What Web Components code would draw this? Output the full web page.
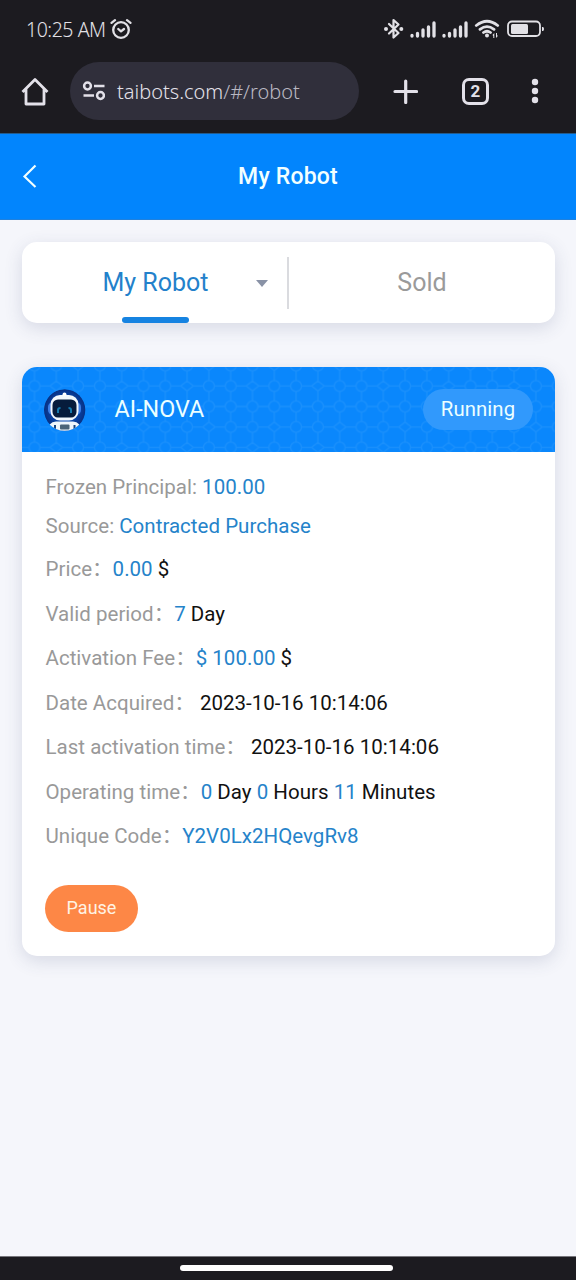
<!DOCTYPE html>
<html lang="en">
<head>
<meta charset="utf-8">
<title>My Robot</title>
<style>
html,body{margin:0;height:100%}
body{font-family:Roboto,"Noto Sans CJK SC",sans-serif;background:#f5f6fb;overflow:hidden}
</style>
</head>
<body>
<robot-app></robot-app>
<script>
const define = (name, html, setup) => customElements.define(name, class extends HTMLElement {
  constructor() {
    super();
    const t = document.createElement('template');
    t.innerHTML = html.trim();
    this.attachShadow({ mode: 'open' }).append(t.content.cloneNode(true));
  }
  connectedCallback() { if (setup) setup(this, this.shadowRoot); }
});

define('status-bar', `
<style>
:host{display:flex;height:58px;align-items:center;justify-content:space-between;padding:0 31px 0 26px;box-sizing:border-box;color:#e2e1e6;font:350 19.500px "Noto Sans",sans-serif}
.time{display:flex;align-items:center;gap:4px}
.time span{letter-spacing:-.45px}
svg{display:block;fill:none;stroke:currentColor;stroke-linecap:round;stroke-linejoin:round}
</style>
<div class="time"><span>10:25 AM</span>
<svg width="22" height="22" viewBox="0 0 22 22" stroke-width="2.300"><circle cx="11" cy="12" r="7.800"/><path d="M1.500 4.800 5 2.100M20.500 4.800 17 2.100M8.300 11l2.700 2.400 3-2.400"/></svg></div>
<svg width="162" height="24" viewBox="383 17 162 24">
<path stroke-width="2.200" d="M389 24l9.500 9-5 4.500V20l5 4.500-9.500 9"/>
<g fill="currentColor" stroke="none"><circle cx="386" cy="29" r="2"/><circle cx="401.300" cy="29" r="2"/>
<circle cx="487" cy="35.500" r="2"/><path d="M492.500 35l1.800-2v5h-1v-2zM497.800 36l-1.800 2v-5h1v2z"/><path d="M542 27h.8q1.200 0 1.200 2t-1.200 2h-.8z"/>
<rect x="511" y="24" width="17" height="10" rx="1.500"/></g>
<g stroke-width="3.300"><path d="M412 36v-.5M417.500 36v-2.500M423 36v-6M428.500 36v-9M434 36V23M444 36v-.5M449.500 36v-2.500M455 36v-6M460.500 36v-9M466 36V23"/></g>
<g stroke-width="2.800"><path d="M476.300 25.500q10.700-8.500 21.400 0M480 29.300q7-5.400 14 0M483.500 32.500q3.500-2.600 7 0"/></g>
<rect x="508" y="21.500" width="32" height="14.500" rx="4" stroke-width="1.800"/>
</svg>`);

define('browser-bar', `
<style>
:host{display:flex;height:75px;box-sizing:border-box;padding:4px 22px 13px 21px;align-items:center;color:#e3e1e9}
svg{display:block;fill:none;stroke:currentColor}
.url{display:flex;align-items:center;gap:12px;box-sizing:border-box;width:289px;height:58px;margin-left:21px;padding-left:12px;border-radius:29px;background:#302f3b;font:350 20px "Noto Sans",sans-serif}
.url i{font-style:normal;color:#b9b8c2}
.plus{margin-left:34px}
.tabs{display:flex;align-items:center;justify-content:center;width:21px;height:21px;border:3px solid;border-radius:7px;margin-left:44px;font:700 17px/21px Roboto,sans-serif}
.dots{margin-left:41px}
</style>
<svg width="28" height="30" viewBox="0 0 28 30" stroke-width="2.800"><path stroke-linejoin="round" d="M1.500 16 14 3.500 26.500 16M5 13v15h18V13"/></svg>
<div class="url"><svg width="23" height="20" viewBox="0 0 23 20" stroke-width="2.500"><circle cx="5.500" cy="5" r="3.400"/><circle cx="18.500" cy="14.500" r="3.400"/><path d="M12 5H22.500M1.500 14.500H12"/></svg><span>taibots.com<i>/#/robot</i></span></div>
<svg class="plus" width="25" height="25" viewBox="0 0 25 25" stroke-width="3.200" stroke-linecap="round"><path d="M2 12.500h21.500M12.700 2v21.500"/></svg>
<div class="tabs">2</div>
<svg class="dots" width="10" height="26" viewBox="0 0 10 26"><g fill="currentColor" stroke="none"><circle cx="5" cy="4" r="3.200"/><circle cx="5" cy="13" r="3.200"/><circle cx="5" cy="22" r="3.200"/></g></svg>`);

define('page-header', `
<style>
:host{display:grid;grid-template-columns:60px 1fr 60px;align-items:center;height:87px;box-sizing:border-box;background:#0285fd;border-top:1px solid #235b8c;border-bottom:1px solid #2281dc;color:#f2ffff}
svg{display:block;margin:0 0 2px 22px;fill:none;stroke:currentColor;stroke-width:2.200}
h1{margin:0;text-align:center;font-size:23px;font-weight:500;letter-spacing:.2px}
</style>
<svg width="16" height="26" viewBox="0 0 16 26"><path d="M13.500 2.500 2.500 13.500l11 10.500"/></svg><h1><slot></slot></h1>`);

define('robot-tabs', `
<style>
:host{display:grid;grid-template-columns:265px 2px 1fr;align-items:center;height:81px;border-radius:15px;background:#fff;box-shadow:0 5px 18px rgba(55,70,110,.16);font-size:25px}
.tab{position:relative;height:100%;box-sizing:border-box;padding-bottom:1px;display:flex;align-items:center;justify-content:center;color:#9a9a9a}
.on{color:#2381cb;padding-left:2px}
.on::after{content:"";position:absolute;bottom:0;left:100px;width:67px;height:6px;border-radius:3px;background:#1683e1}
.arrow{position:absolute;right:19px;top:38px;border:6.500px solid transparent;border-top:7px solid #8992a6;border-bottom:0}
.line{height:52px;background:#dadbdf}
</style>
<div class="tab on"><slot name="first"></slot><span class="arrow"></span></div><div class="line"></div><div class="tab"><slot name="second"></slot></div>`);

define('robot-avatar', `
<style>:host{display:block;width:42px;height:42px}svg{display:block}</style>
<svg width="42" height="42" viewBox="0 0 42 42">
<defs><clipPath id="c"><circle cx="20.500" cy="21" r="20.800"/></clipPath><radialGradient id="g"><stop offset=".5" stop-color="#0a4db4"/><stop offset="1" stop-color="#072f82"/></radialGradient></defs>
<g clip-path="url(#c)"><circle cx="21" cy="21" r="21" fill="url(#g)"/>
<path d="M4 42q0-9 8-9.500h17q8 .5 8 9.500z" fill="#eef6fc"/><path d="M11 36v6M30.500 36v6" stroke="#174581" stroke-width="2"/>
<rect x="4" y="13" width="33" height="13" rx="5" fill="#3c7fe8"/>
<rect x="6.500" y="6" width="28" height="25.500" rx="9.500" fill="#f2f8fd"/><circle cx="20.500" cy="5.500" r="2" fill="#fff"/>
<rect x="8.500" y="10.500" width="24" height="18" rx="5.500" fill="#061c3c"/>
<path d="M14 24v-3q0-2 2.500-2M27 24v-3q0-2-2.500-2" fill="none" stroke="#1479ad" stroke-width="2"/>
<rect x="16" y="35.500" width="9.500" height="5" rx="1" fill="#4b6478"/></g></svg>`);

define('robot-card', `
<style>
:host{display:block;height:589px;border-radius:15px;overflow:hidden;background:#fff;box-shadow:0 5px 18px rgba(55,70,110,.16)}
.head{position:relative;height:85px;background:#0a87fc;color:#ecffff}
.bg{position:absolute;inset:0}
.row{position:relative;height:100%;box-sizing:border-box;display:flex;align-items:center;padding:0 22px;font-size:23.300px}
.name{margin:-1px 0 0 28.600px;flex:1}
.badge{display:flex;align-items:center;justify-content:center;width:110px;height:41px;box-sizing:border-box;padding-bottom:2px;border-radius:21px;background:#3199fc;font-size:20.300px;letter-spacing:.1px}
.body{padding:16px 23px}
</style>
<div class="head"><svg class="bg" width="533" height="85"><defs><pattern id="p" width="65.400" height="61.500" patternUnits="userSpaceOnUse" patternTransform="translate(1.600 8.750)"><g fill="none" stroke="#2897fb" stroke-width="1.300" opacity=".55">
<circle cx="10.900" cy="10.250" r="5.500"/><circle cx="54.500" cy="10.250" r="5.500"/><circle cx="10.900" cy="30.750" r="5.500"/><circle cx="32.700" cy="30.750" r="5.500"/><circle cx="54.500" cy="30.750" r="5.500"/><circle cx="10.900" cy="51.250" r="5.500"/><circle cx="32.700" cy="51.250" r="5.500"/>
<path d="M0 10.250h5.400M16.400 10.250h10l6.300 5 6.300-5h10M60 10.250h5.400M26.400 10.250l6.300-5 6.300 5M0 30.750h5.400M16.400 30.750h10.800M38.200 30.750H49M60 30.750h5.400M0 51.250h5.400M16.400 51.250h10.800M38.200 51.250h10l6.300 5 6.300-5h4.600M48.200 51.250l6.300-5 6.300 5M10.900 0v4.750M10.900 15.750v9.500M10.900 36.250v9.500M10.900 56.750v4.750M32.700 0v5.250M32.700 15.250v10M32.700 36.250v9.500M32.700 56.750v4.750M54.500 0v4.750M54.500 15.750v9.500M54.500 36.250v10M54.500 56.250v5.250"/></g></pattern></defs><rect width="533" height="85" fill="url(#p)"/></svg>
<div class="row"><robot-avatar></robot-avatar><span class="name"><slot name="name"></slot></span><span class="badge"><slot name="state"></slot></span></div></div>
<div class="body"><slot></slot></div>`);

define('info-row', `
<style>
:host{display:block;height:44.500px;line-height:44.500px;font-size:20.500px;color:#111;white-space:pre;text-indent:.5px;letter-spacing:.02px}
:host([compact]){height:38.500px;line-height:38.500px}
:host([spaced]){margin-top:2px}
.label{color:#999}
::slotted(b){font-weight:400;color:#2583ca}
</style><span class="label"></span><slot></slot>`, (el, root) => { root.querySelector('.label').textContent = el.getAttribute('label'); });

define('pill-button', `
<style>
:host{display:block;margin-top:26px}
button{display:block;width:93px;height:47px;padding:0 0 1px;border:0;border-radius:24px;background:#fd8746;color:#fff3e4;font:400 18px Roboto,sans-serif}
</style><button><slot></slot></button>`);

define('gesture-bar', `
<style>:host{display:flex;justify-content:center;height:24px;box-sizing:border-box;padding:8px 3px 0 0;background:#1c1b20;border-top:1px solid #77767c}
span{width:213px;height:6px;border-radius:3px;background:#fff}</style><span></span>`);

define('robot-app', `
<style>
:host{display:flex;flex-direction:column;width:576px;height:1280px}
.top{background:#1c1b20}
main{flex:1;padding:22px 21px 0 22px;display:flex;flex-direction:column;gap:44px}
</style>
<div class="top"><status-bar></status-bar><browser-bar></browser-bar></div>
<page-header>My Robot</page-header>
<main>
<robot-tabs><span slot="first">My Robot</span><span slot="second">Sold</span></robot-tabs>
<robot-card><span slot="name">AI-NOVA</span><span slot="state">Running</span>
<info-row compact label="Frozen Principal: "><b>100.00</b></info-row>
<info-row compact label="Source: "><b>Contracted Purchase</b></info-row>
<info-row spaced label="Price："><b>0.00</b> $</info-row>
<info-row label="Valid period："><b>7</b> Day</info-row>
<info-row label="Activation Fee："><b>$ 100.00</b> $</info-row>
<info-row label="Date Acquired："> 2023-10-16 10:14:06</info-row>
<info-row label="Last activation time："> 2023-10-16 10:14:06</info-row>
<info-row label="Operating time："><b>0</b> Day <b>0</b> Hours <b>11</b> Minutes</info-row>
<info-row label="Unique Code："><b>Y2V0Lx2HQevgRv8</b></info-row>
<pill-button>Pause</pill-button>
</robot-card>
</main>
<gesture-bar></gesture-bar>`);
</script>
</body>
</html>
